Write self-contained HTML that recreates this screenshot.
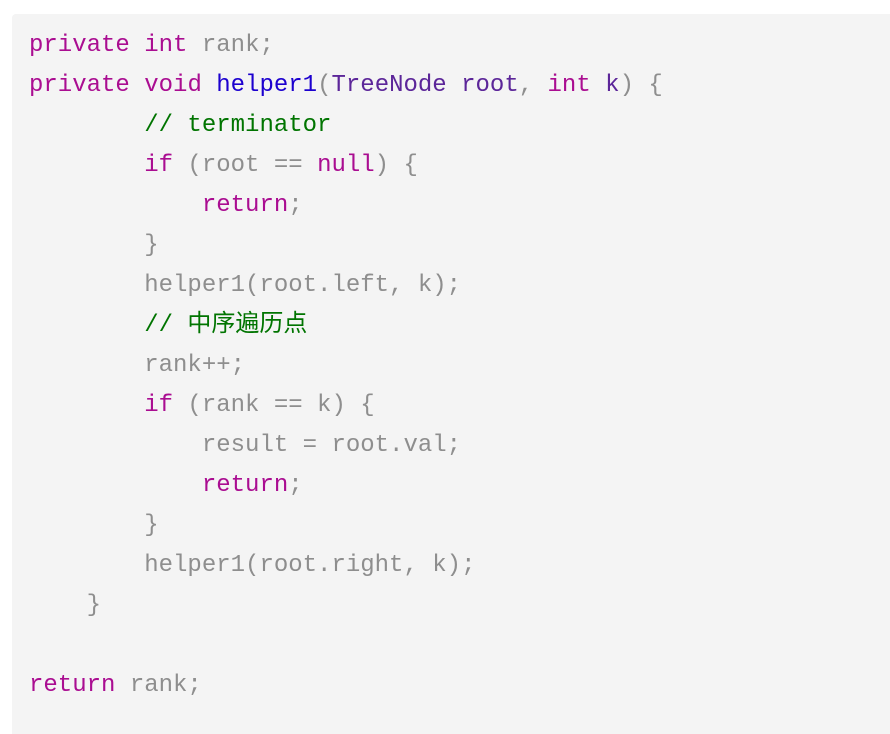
<!DOCTYPE html>
<html><head><meta charset="utf-8"><style>
html,body{margin:0;padding:0;background:#fff;width:890px;height:706px;overflow:hidden}
.b{position:absolute;left:12px;top:14px;right:0;height:720px;background:#f4f4f4;border-radius:4px 0 0 0}
pre{position:absolute;left:29px;top:26px;margin:0;font-family:"Liberation Mono","Noto Sans CJK SC",monospace;font-size:24px;line-height:40px;color:#8e8e8e}
.k{color:#aa0d91}.f{color:#1c00cf}.t{color:#5c2699}.c{color:#007400}
</style></head><body><div class="b"></div>
<pre><span class="k">private</span> <span class="k">int</span> rank;
<span class="k">private</span> <span class="k">void</span> <span class="f">helper1</span>(<span class="t">TreeNode root</span>, <span class="k">int</span> <span class="t">k</span>) {
        <span class="c">// terminator</span>
        <span class="k">if</span> (root == <span class="k">null</span>) {
            <span class="k">return</span>;
        }
        helper1(root.left, k);
        <span class="c">// 中序遍历点</span>
        rank++;
        <span class="k">if</span> (rank == k) {
            result = root.val;
            <span class="k">return</span>;
        }
        helper1(root.right, k);
    }

<span class="k">return</span> rank;</pre>
</body></html>
